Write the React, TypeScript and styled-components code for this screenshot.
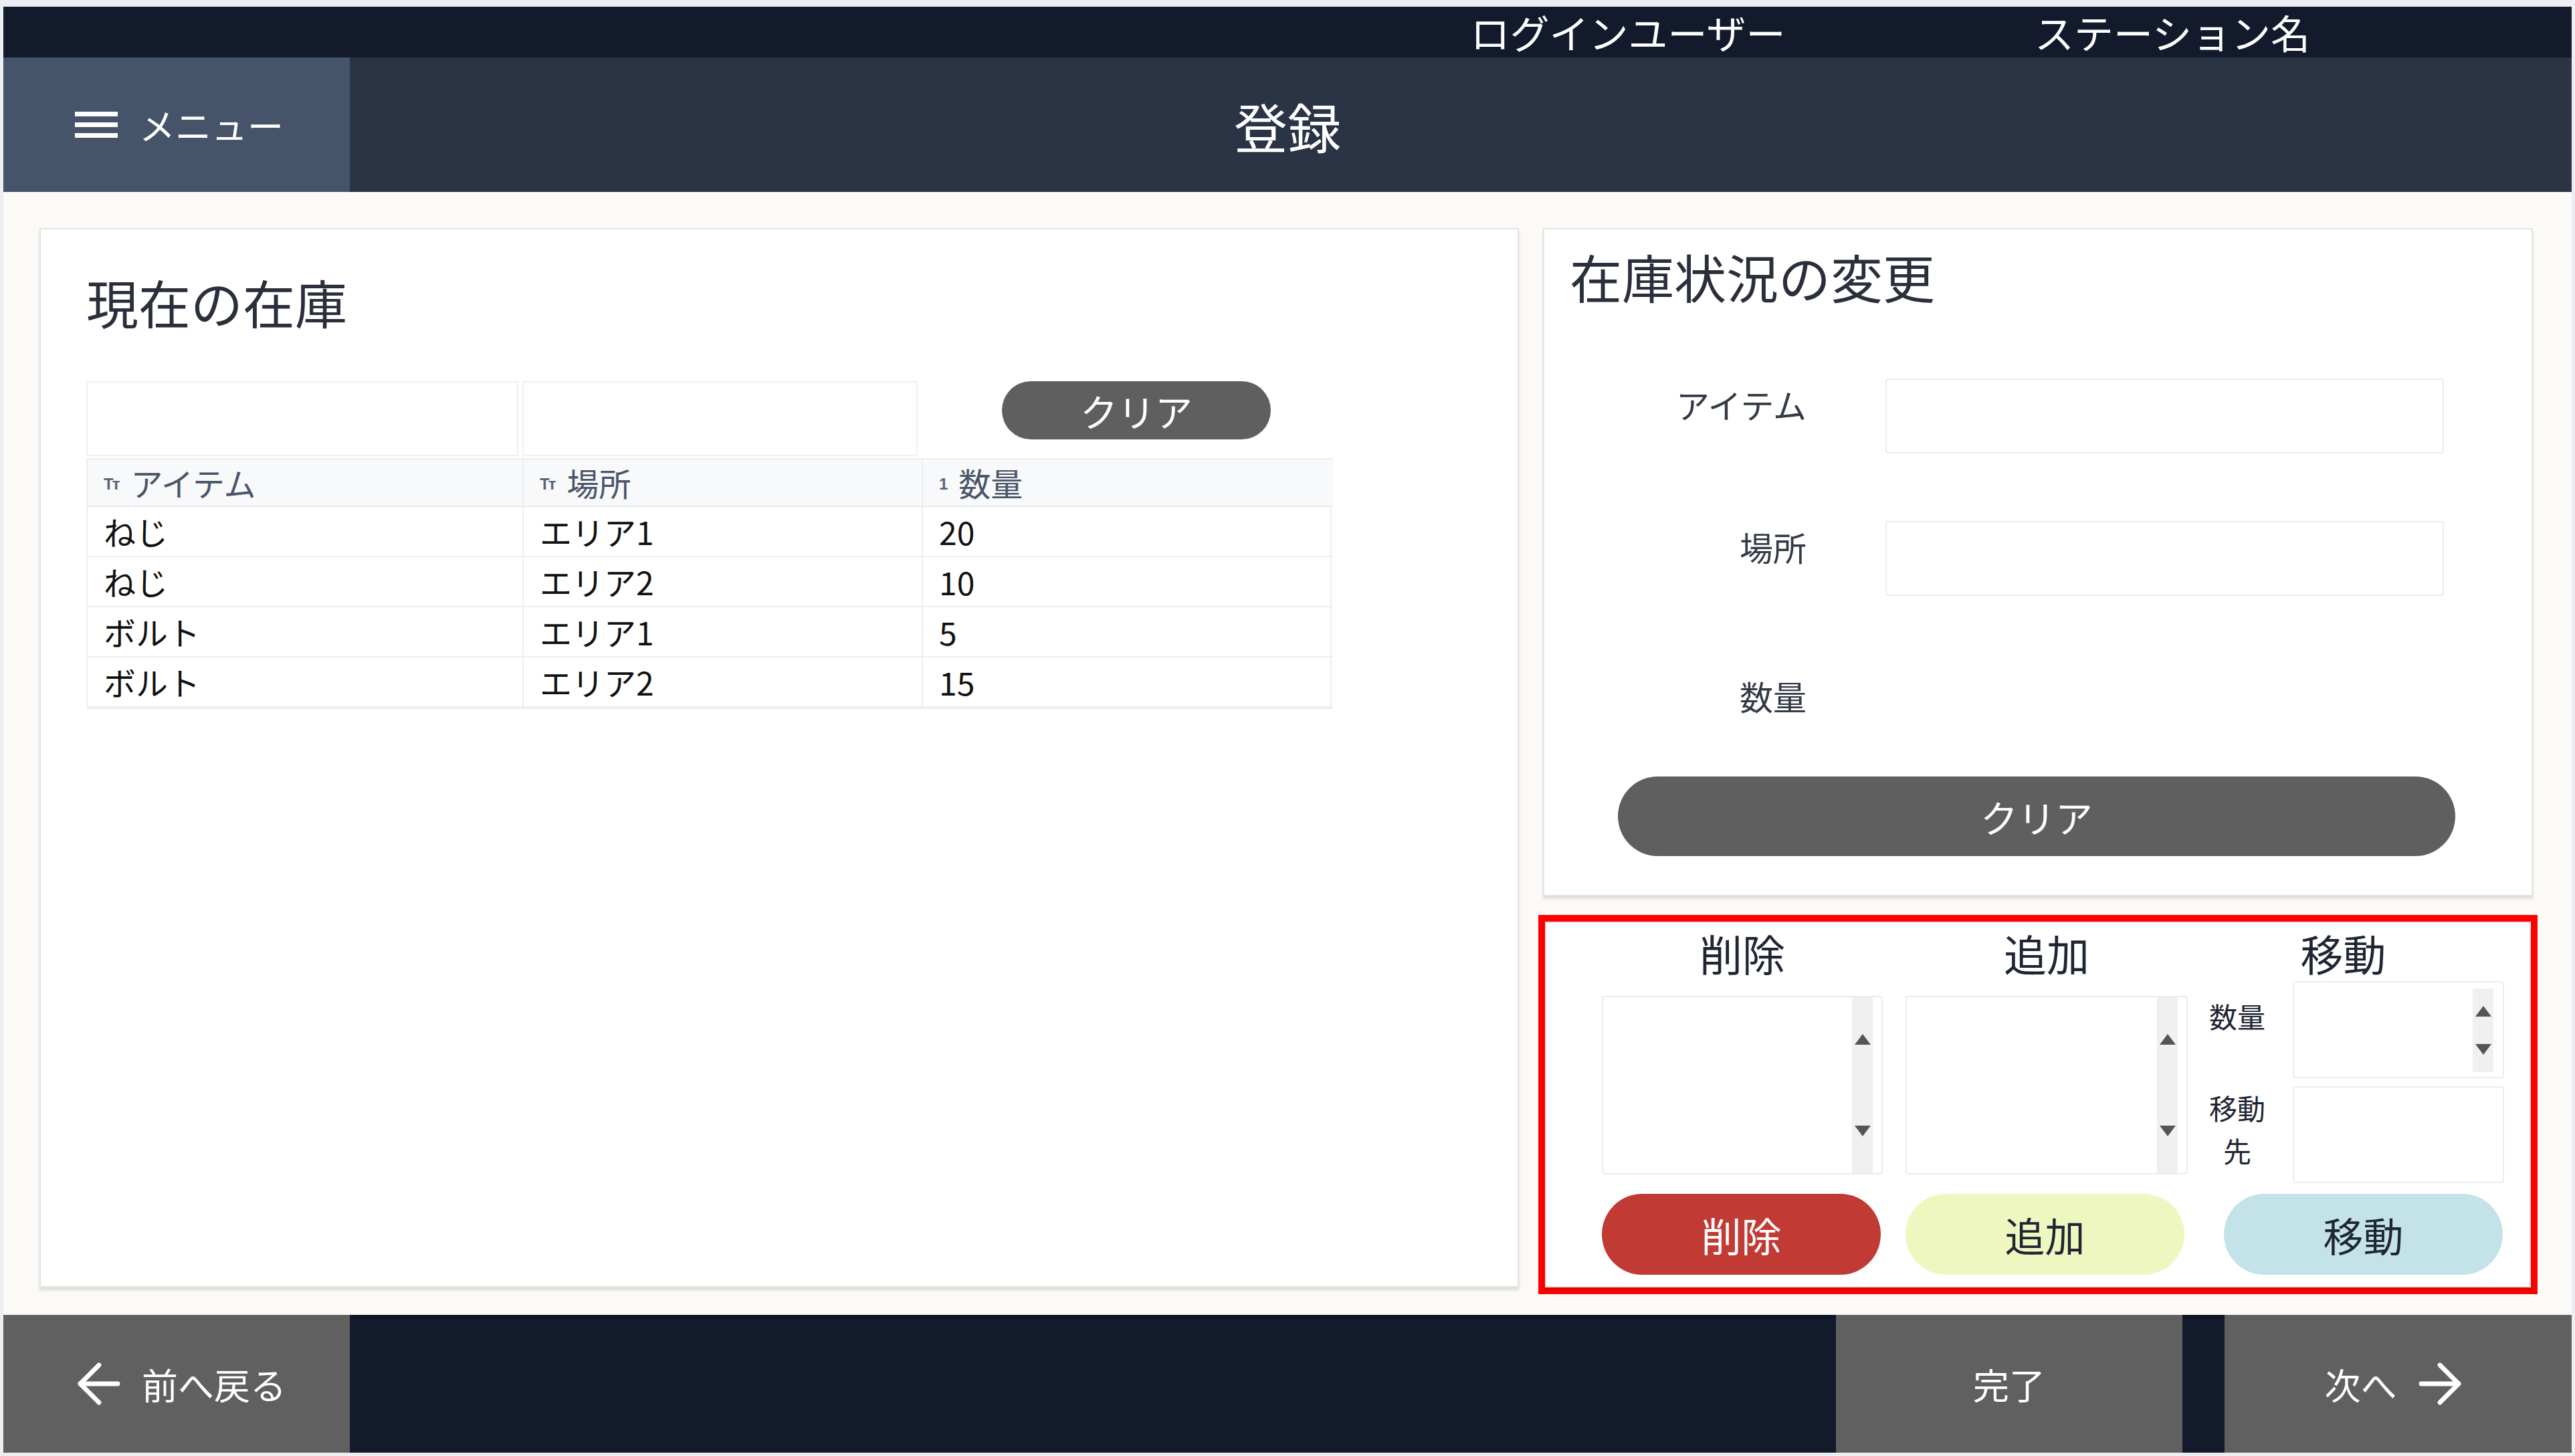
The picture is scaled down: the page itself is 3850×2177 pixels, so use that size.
import styled, { createGlobalStyle } from 'styled-components'
import { ArrowLeft, ArrowRight } from 'lucide-react'

const GlobalStyle = createGlobalStyle`
  html, body { margin: 0; padding: 0; }
  body {
    font-family: "Noto Sans CJK JP", "Noto Sans", "Liberation Sans", sans-serif;
    background: #eceef1;
  }
  * { box-sizing: border-box; }
`

const Frame = styled.div`
  width: 3850px;
  height: 2177px;
  padding: 10px 5px 5px 5px;
  background: #eceef1;
  display: flex;
  flex-direction: column;
`

const TopBar = styled.div`
  height: 76px;
  background: #121a2c;
  display: flex;
  justify-content: flex-end;
  padding-right: 190px;
  color: #fff;
`

const TopCell = styled.div`
  width: 814px;
  text-align: center;
  font-size: 59px;
  line-height: 76px;
`

const Header = styled.header`
  height: 201px;
  background: #2a3445;
  display: grid;
  grid-template-columns: 518px 1fr 518px;
`

const MenuButton = styled.div`
  background: #465469;
  display: flex;
  align-items: center;
  padding-left: 107px;
  gap: 32px;
  color: #fff;
  font-size: 54px;
`

const Burger = styled.span`
  display: flex;
  flex-direction: column;
  gap: 9px;
  span {
    display: block;
    width: 64px;
    height: 7px;
    background: #fff;
  }
`

const PageTitle = styled.h1`
  margin: 0;
  align-self: center;
  text-align: center;
  color: #fff;
  font-size: 80px;
  font-weight: 400;
`

const Main = styled.main`
  flex: 1;
  background: #fbfaf6;
  display: flex;
  align-items: flex-start;
  gap: 29px;
  padding: 54px 51px 0 54px;
`

const Card = styled.section`
  background: #fff;
  border: 2px solid #e3e3e3;
  box-shadow: 0 4px 4px rgba(0, 0, 0, 0.12);
`

const LeftCard = styled(Card)`
  width: 2212px;
  height: 1584px;
  padding-left: 68px;
`

const CardTitle = styled.h2<{ $top: number }>`
  margin: ${p => p.$top}px 0 0 0;
  font-size: 78px;
  line-height: 1.2;
  font-weight: 400;
  color: #2a2f3b;
`

const FilterRow = styled.div`
  margin-top: 71px;
  display: grid;
  grid-template-columns: 652px 597px 613px;
  height: 112px;
`

const FilterBox = styled.div`
  border: 2px solid #eef0f3;
  background: #fff;
  margin-right: 6px;
`

const PillButton = styled.button<{ $bg: string; $fg: string; $size: number }>`
  border: none;
  border-radius: 999px;
  background: ${p => p.$bg};
  color: ${p => p.$fg};
  font-family: inherit;
  font-size: ${p => p.$size}px;
  padding: 0;
  cursor: pointer;
`

const SmallClear = styled(PillButton)`
  width: 402px;
  height: 87px;
  margin-left: 120px;
`

const Table = styled.div`
  margin-top: 3px;
  width: 1862px;
  display: grid;
  grid-template-columns: 652px 597px 613px;
  border: 2px solid #eceef2;
  border-top: none;
`

const HeadCell = styled.div`
  height: 73px;
  background: #f8f9fb;
  border-top: 2px solid #eceef2;
  border-bottom: 2px solid #e6e8ec;
  border-right: 2px solid #eceef2;
  display: flex;
  align-items: center;
  gap: 18px;
  padding-left: 24px;
  font-size: 48px;
  color: #4a5568;
  &:nth-child(3) { border-right: none; }
`

const TypeIcon = styled.span`
  font-family: "Liberation Sans", sans-serif;
  font-weight: 700;
  font-size: 24px;
  color: #5a6478;
  letter-spacing: -2px;
  padding-top: 6px;
`

const Cell = styled.div`
  height: 75px;
  border-bottom: 2px solid #eceef2;
  border-right: 2px solid #eceef2;
  display: flex;
  align-items: center;
  padding-left: 24px;
  font-size: 48px;
  color: #111;
  &:nth-child(3n) { border-right: none; }
`

const RightColumn = styled.div`
  width: 1494px;
  display: flex;
  flex-direction: column;
  gap: 28px;
`

const RightCard = styled(Card)`
  margin: 0 7px;
  height: 999px;
  padding-left: 38px;
`

const FormGrid = styled.div`
  margin: 105px 0 0 -38px;
  display: grid;
  grid-template-columns: 392px 835px;
  grid-auto-rows: 112px;
  column-gap: 118px;
  row-gap: 101px;
`

const FieldLabel = styled.div<{ $top?: number }>`
  text-align: right;
  font-size: 50px;
  line-height: 1.2;
  padding-top: ${p => p.$top ?? 8}px;
  color: #333a45;
`

const TextBox = styled.div`
  border: 2px solid #ececec;
  border-radius: 4px;
  background: #fff;
`

const WideClear = styled(PillButton)`
  width: 1252px;
  height: 119px;
  margin: 57px 0 0 72px;
`

const RedBox = styled.div`
  border: 10px solid #ff0000;
`

const ActionCard = styled(Card)`
  display: grid;
  grid-template-columns: 420px 422px 443px;
  grid-template-rows: 77px 306px 137px;
  column-gap: 34px;
  padding: 6px 0 17px 83px;
`

const ActionHead = styled.div<{ $right?: number }>`
  text-align: center;
  font-size: 64px;
  line-height: 77px;
  color: #1f2533;
  padding-right: ${p => p.$right ?? 0}px;
`

const ActionBody = styled.div`
  padding-top: 4px;
`

const ListBox = styled(TextBox)`
  margin-top: 22px;
  height: 267px;
  display: flex;
  justify-content: flex-end;
  padding-right: 13px;
`

const ScrollBar = styled.div<{ $pad: number }>`
  width: 31px;
  background: #f0f0f0;
  display: flex;
  flex-direction: column;
  justify-content: space-between;
  align-items: center;
  padding: ${p => p.$pad}px 0;
`

const Tri = styled.span<{ $down?: boolean }>`
  width: 0;
  height: 0;
  border-left: 12px solid transparent;
  border-right: 12px solid transparent;
  ${p => (p.$down ? 'border-top: 16px solid #555;' : 'border-bottom: 16px solid #555;')}
`

const MoveGrid = styled.div`
  display: grid;
  grid-template-columns: 88px 316px;
  grid-template-rows: 145px 145px;
  column-gap: 39px;
  row-gap: 12px;
  margin-left: -4px;
`

const MoveLabel = styled.div<{ $top: number }>`
  text-align: center;
  white-space: nowrap;
  font-size: 42px;
  line-height: 64px;
  padding-top: ${p => p.$top}px;
  color: #1f2533;
`

const NumberBox = styled(TextBox)`
  display: flex;
  justify-content: flex-end;
  padding: 9px 14px 7px 0;
`

const ActionButton = styled(PillButton)<{ $shift?: number }>`
  margin-top: 16px;
  height: 121px;
  width: 417px;
  margin-left: ${p => p.$shift ?? 0}px;
`

const Footer = styled.footer`
  height: 206px;
  background: #121a2c;
  display: flex;
  box-shadow: inset 0 4px 4px rgba(0, 0, 0, 0.25);
`

const FooterButton = styled.div<{ $w: number; $gap?: number }>`
  width: ${p => p.$w}px;
  margin-left: ${p => p.$gap ?? 0}px;
  background: #606060;
  color: #fff;
  font-size: 54px;
  display: flex;
  align-items: center;
  justify-content: center;
  gap: 16px;
`

const Spacer = styled.div`
  flex: 1;
`

const rows = [
  ['ねじ', 'エリア1', '20'],
  ['ねじ', 'エリア2', '10'],
  ['ボルト', 'エリア1', '5'],
  ['ボルト', 'エリア2', '15'],
]

export default function App() {
  return (
    <>
      <GlobalStyle />
      <Frame>
        <TopBar>
          <TopCell>ログインユーザー</TopCell>
          <TopCell>ステーション名</TopCell>
        </TopBar>
        <Header>
          <MenuButton>
            <Burger><span /><span /><span /></Burger>
            メニュー
          </MenuButton>
          <PageTitle>登録</PageTitle>
          <div />
        </Header>

        <Main>
          <LeftCard>
            <CardTitle $top={62}>現在の在庫</CardTitle>
            <FilterRow>
              <FilterBox />
              <FilterBox />
              <div>
                <SmallClear $bg="#5f5f5f" $fg="#fff" $size={56}>クリア</SmallClear>
              </div>
            </FilterRow>
            <Table>
              <HeadCell><TypeIcon>Tт</TypeIcon>アイテム</HeadCell>
              <HeadCell><TypeIcon>Tт</TypeIcon>場所</HeadCell>
              <HeadCell><TypeIcon>1</TypeIcon>数量</HeadCell>
              {rows.map((r, i) =>
                r.map((v, j) => <Cell key={`${i}-${j}`}>{v}</Cell>)
              )}
            </Table>
          </LeftCard>

          <RightColumn>
            <RightCard>
              <CardTitle $top={24}>在庫状況の変更</CardTitle>
              <FormGrid>
                <FieldLabel>アイテム</FieldLabel>
                <TextBox />
                <FieldLabel>場所</FieldLabel>
                <TextBox />
                <FieldLabel $top={18}>数量</FieldLabel>
                <div />
              </FormGrid>
              <WideClear $bg="#5f5f5f" $fg="#fff" $size={56}>クリア</WideClear>
            </RightCard>

            <RedBox>
              <ActionCard>
                <ActionHead>削除</ActionHead>
                <ActionHead>追加</ActionHead>
                <ActionHead $right={46}>移動</ActionHead>

                <ActionBody>
                  <ListBox>
                    <ScrollBar $pad={55}><Tri /><Tri $down /></ScrollBar>
                  </ListBox>
                </ActionBody>
                <ActionBody>
                  <ListBox>
                    <ScrollBar $pad={55}><Tri /><Tri $down /></ScrollBar>
                  </ListBox>
                </ActionBody>
                <ActionBody>
                  <MoveGrid>
                    <MoveLabel $top={20}>数量</MoveLabel>
                    <NumberBox>
                      <ScrollBar $pad={26}><Tri /><Tri $down /></ScrollBar>
                    </NumberBox>
                    <MoveLabel $top={0}>移動<br />先</MoveLabel>
                    <TextBox />
                  </MoveGrid>
                </ActionBody>

                <ActionButton $bg="#c13a33" $fg="#fff" $size={60}>削除</ActionButton>
                <ActionButton $bg="#eef7c0" $fg="#1f2533" $size={60}>追加</ActionButton>
                <ActionButton $bg="#c3e3e8" $fg="#1f2533" $size={60} $shift={20}>移動</ActionButton>
              </ActionCard>
            </RedBox>
          </RightColumn>
        </Main>

        <Footer>
          <FooterButton $w={518}>
            <ArrowLeft size={96} strokeWidth={1.7} />
            前へ戻る
          </FooterButton>
          <Spacer />
          <FooterButton $w={518}>完了</FooterButton>
          <FooterButton $w={519} $gap={63}>
            次へ
            <ArrowRight size={96} strokeWidth={1.7} />
          </FooterButton>
        </Footer>
      </Frame>
    </>
  )
}
